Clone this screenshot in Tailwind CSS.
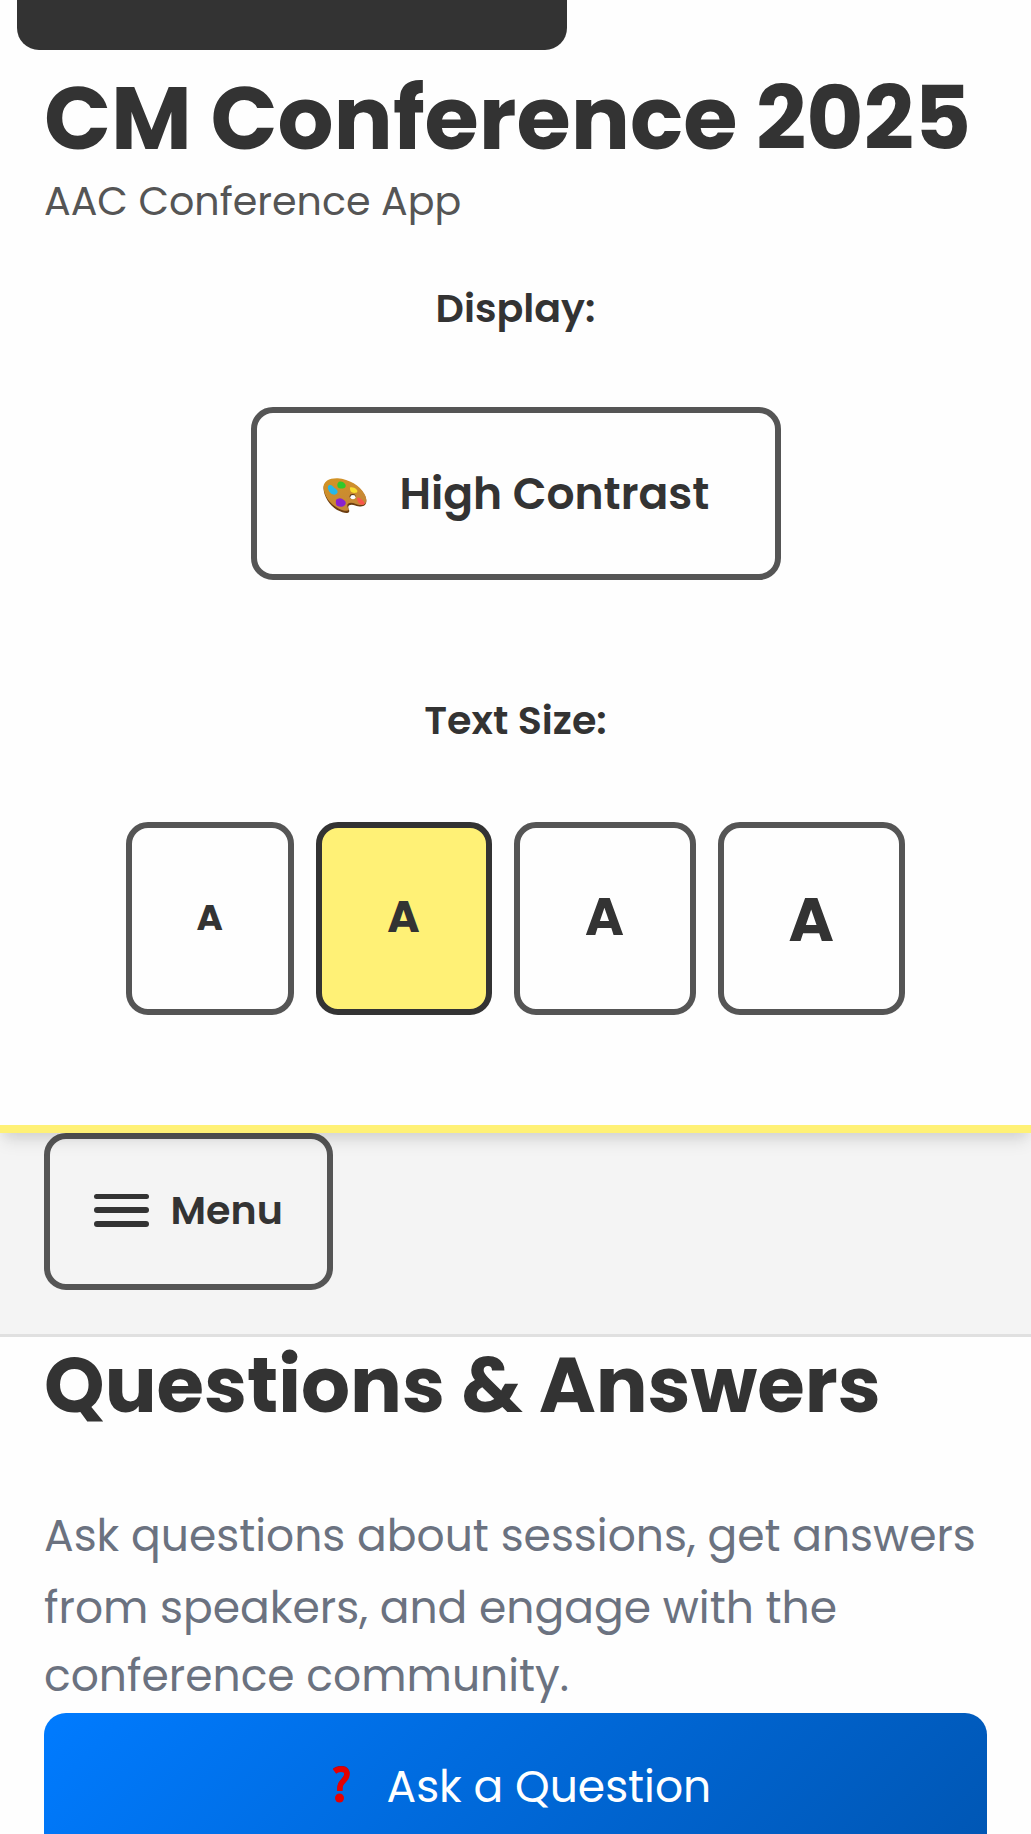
<!DOCTYPE html>
<html lang="en">
<head>
<meta charset="utf-8">
<meta name="viewport" content="width=device-width, initial-scale=1">
<title>CM Conference 2025</title>
<script src="https://cdn.jsdelivr.net/npm/@tailwindcss/browser@4"></script>
</head>
<body class="relative h-[1834px] overflow-hidden bg-[#fefefe] font-['Poppins','Inter',sans-serif] text-[#333] whitespace-nowrap">
  <!-- Skip link, partly off screen -->
  <div class="absolute left-[16.5px] top-0 h-[49.5px] w-[550px] rounded-b-[22px] bg-[#333]"></div>

  <header class="relative z-10 flex h-[1133px] flex-col items-center border-b-8 border-[#fff176] pt-[87px] shadow-[0_11px_16.5px_-2.75px_rgba(0,0,0,0.1),0_5.5px_11px_-2.75px_rgba(0,0,0,0.06)]">
    <div class="w-full px-[44px]">
      <h1 class="text-[88px] font-bold leading-[64px]">CM Conference 2025</h1>
      <p class="mt-[20px] text-[39.6px] leading-[60px] text-[#555]">AAC Conference App</p>
    </div>

    <p class="mt-[47px] text-[39.6px] font-semibold leading-[60px]">Display:</p>
    <button class="mt-[69px] flex h-[173px] w-[530px] shrink-0 items-center rounded-[22px] border-6 border-[#555] pl-[66px] text-[44px] font-semibold">
      <svg class="mt-[4px] h-[35px] w-[44px] shrink-0" viewBox="38 22 132 106">
        <defs>
          <linearGradient id="wood" x1="0" y1="0" x2="0.6" y2="1">
            <stop offset="0" stop-color="#d39423"/>
            <stop offset="1" stop-color="#c58638"/>
          </linearGradient>
        </defs>
        <path fill="#6b3d10" d="M39 54C38 36 56 24 82 25c34 2 68 24 80 46 8 14 9 26 2 33-7 7-19 4-29 1-10-4-22-3-21 6 0 7 5 9 2 14-4 6-20 2-34-5C58 107 40 78 39 54Z"/>
        <path fill="url(#wood)" d="M39 51C38 33 56 22 82 23c34 2 68 24 80 46 8 14 9 25 2 31-7 6-19 4-29 0-11-5-25-4-24 6 0 7 7 9 4 13-4 5-19 1-31-5C58 102 40 75 39 51Z"/>
        <ellipse cx="127" cy="78" rx="9" ry="7.500" fill="#5a3512"/>
        <ellipse cx="128" cy="80" rx="8" ry="6.500" fill="#fff"/>
        <path fill="#27b8e8" d="M55 44c8-3 12 3 17 8 6 3 12 8 9 15-3 7-14 7-20 1-8-7-12-19-6-24Z"/>
        <path fill="#2fc92a" d="M85 34c7-3 14 0 18 5 5 5 4 13-3 14-8 3-18 0-19-7-1-5 1-9 4-12Z"/>
        <path fill="#f8dc2e" d="M119 51c7-2 14 0 19 5 6 5 4 10-2 11-7 1-15-2-16-8-1-3-1-6-1-8Z"/>
        <path fill="#f9564c" d="M142 81c6 0 14 6 19 13 5 6 2 9-4 9-7 0-14-5-15-12-2-4-2-8 0-10Z"/>
        <path fill="#8a22cf" d="M77 88c6-5 13-6 20-2 7 4 12 9 8 16-4 8-16 9-24 5-6-4-5-14-4-19Z"/>
      </svg>
      <span class="ml-[33px]">High Contrast</span>
    </button>

    <p class="mt-[110px] text-[39.6px] font-semibold leading-[60px]">Text Size:</p>
    <div class="mt-[72px] flex h-[193px] shrink-0 gap-[22px] font-bold">
      <button class="w-[167.5px] rounded-[22px] border-6 border-[#555] pb-[2px] text-[35.75px]">A</button>
      <button class="w-[176px] rounded-[22px] border-6 border-[#333] bg-[#fff176] pb-[4px] text-[44px]">A</button>
      <button class="w-[182px] rounded-[22px] border-6 border-[#555] pb-[4px] text-[52.8px]">A</button>
      <button class="w-[187.5px] rounded-[22px] border-6 border-[#555] pt-[3px] text-[61.6px]">A</button>
    </div>
  </header>

  <nav class="h-[204px] border-b-3 border-[#e0e0e0] bg-[#f4f4f4] px-[44px]">
    <button class="flex h-[157px] w-[289px] items-center gap-[22px] rounded-[22px] border-6 border-[#555] pb-[3px] pl-[43.5px] text-[39.6px] font-semibold">
      <span class="flex w-[55px] flex-col gap-[8.25px]">
        <span class="h-[5.5px] rounded-full bg-[#333]"></span>
        <span class="h-[5.5px] rounded-full bg-[#333]"></span>
        <span class="h-[5.5px] rounded-full bg-[#333]"></span>
      </span>
      <span class="pt-[2px]">Menu</span>
    </button>
  </nav>

  <main class="px-[44px] pt-[8px]">
    <h2 class="text-[77px] font-bold leading-[80px]">Questions &amp; Answers</h2>
    <p class="mt-[75px] text-[44px] leading-[72px] text-[#6b7280]">
      <span class="block">Ask questions about sessions, get answers</span>
      <span class="block">from speakers, and engage with the</span>
      <span class="block leading-[64px]">conference community.</span>
    </p>
    <button class="mt-[5px] flex h-[147px] w-[943px] items-center rounded-[22px] bg-linear-135 from-[#007bff] to-[#0056b3] pl-[288px] text-[44px] text-white">
      <svg class="mb-[4px] h-[37px] w-[18px] shrink-0" viewBox="0 0 18 37">
        <path d="M2.500 4.500C5 2.500 8 2 11 2.500c4 .7 4.500 4 3.500 7-1 3.500-4.500 5.500-6 9-.7 1.700-.7 3-.7 6" fill="none" stroke="#a10d2a" stroke-width="5"/>
        <path d="M2.500 5.500C5 3.500 8 3 11 3.500c4 .7 4.500 4 3.500 7-1 3.500-4.500 5-6 8.500-.7 1.700-.7 3-.7 6" fill="none" stroke="#e60000" stroke-width="5.500"/>
        <circle cx="7.500" cy="32" r="4.500" fill="#e60000"/>
      </svg>
      <span class="ml-[36.5px]">Ask a Question</span>
    </button>
  </main>
</body>
</html>
